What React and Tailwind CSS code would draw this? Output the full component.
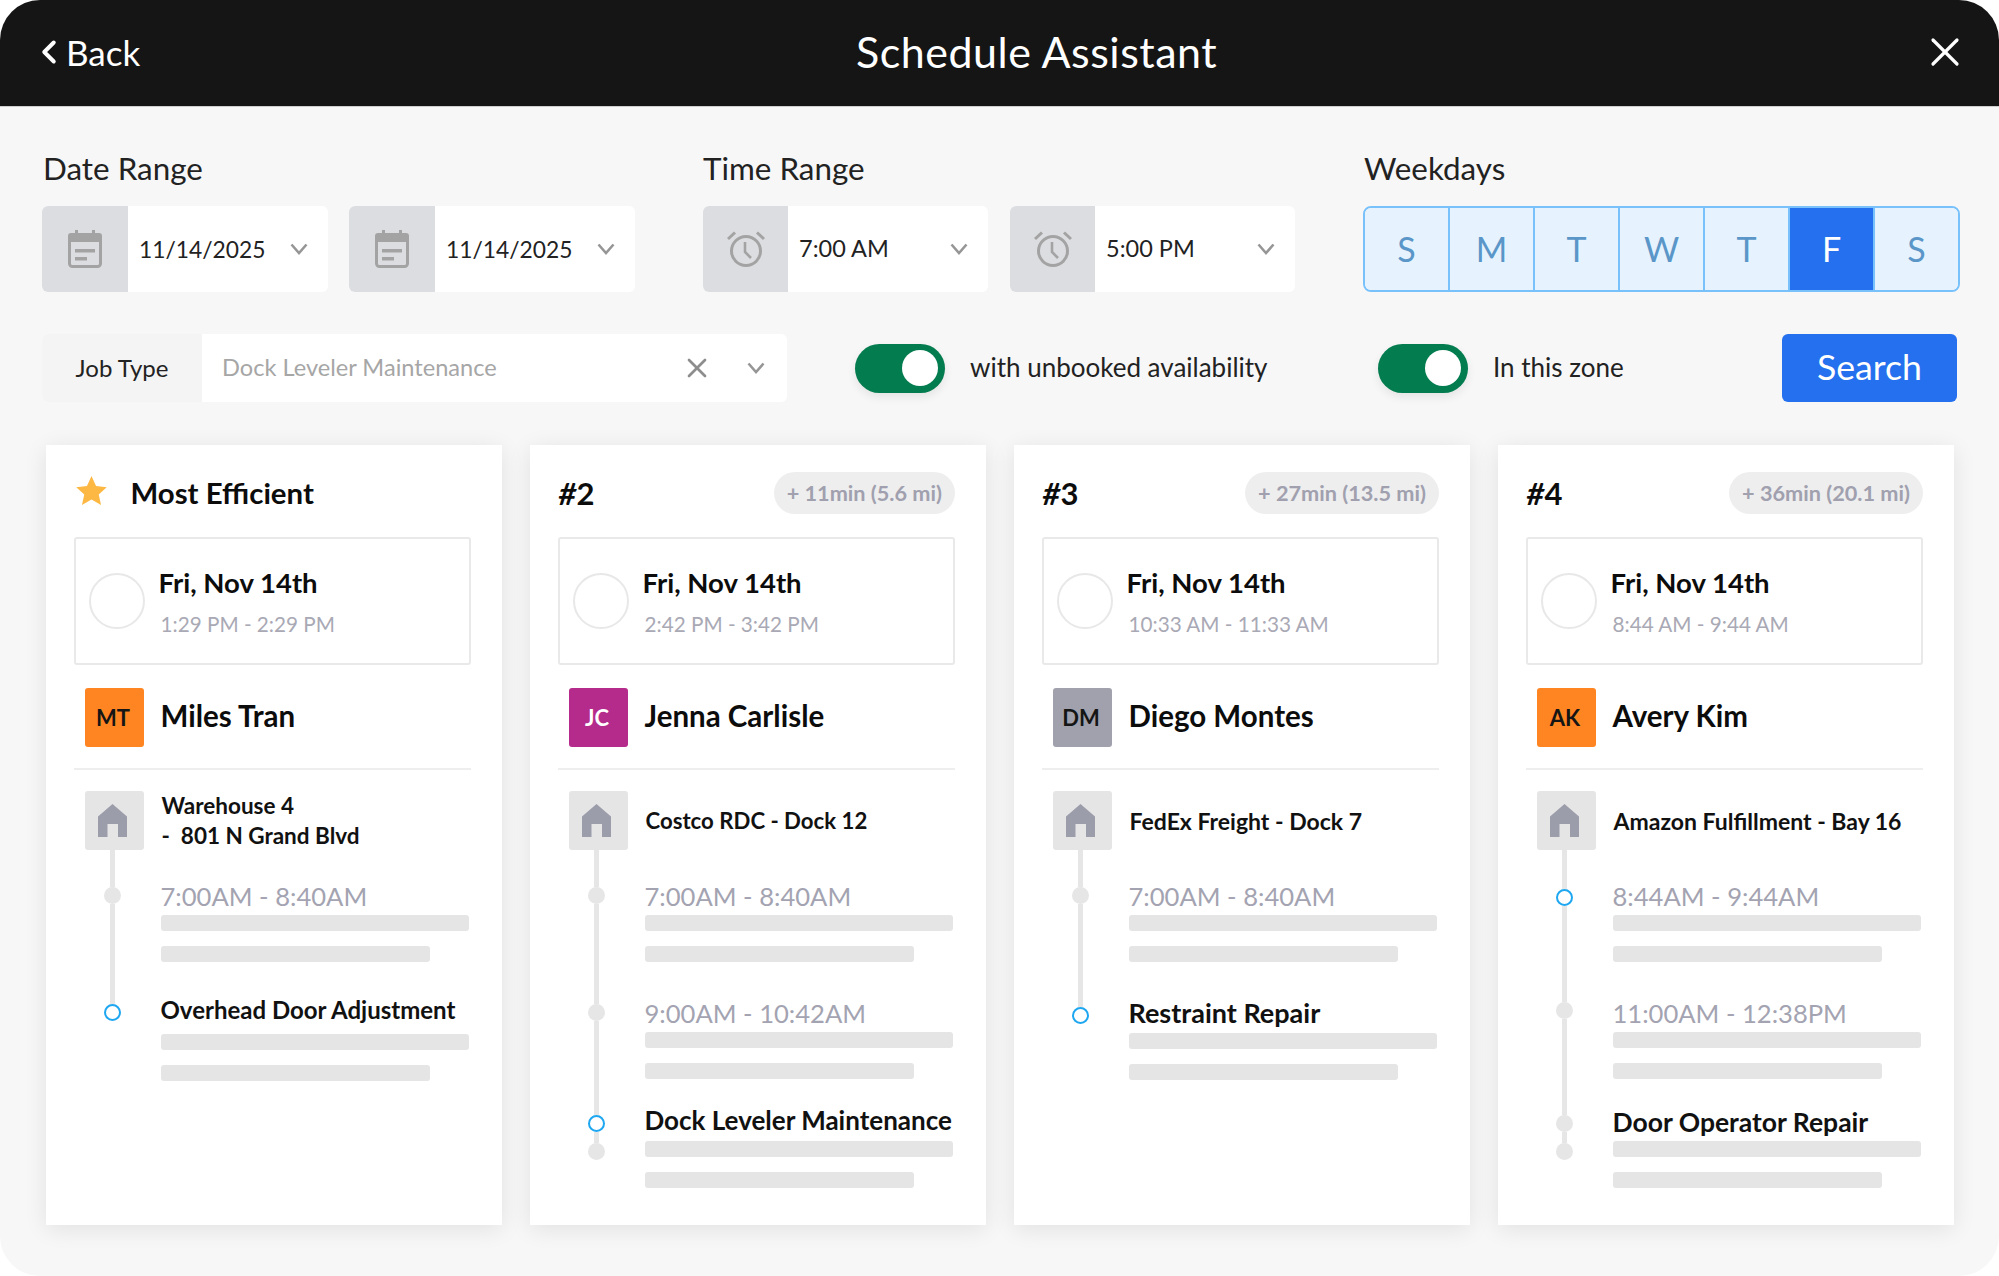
import { ChevronLeft, X } from "lucide-react";

const FONT = "font-['Lato','Liberation_Sans',sans-serif]";

const CARDS = [
  {
    rank: "Most Efficient",
    star: true,
    time: "1:29 PM - 2:29 PM",
    initials: "MT",
    avatar: "bg-[#ff8522]",
    name: "Miles Tran",
    address: ["Warehouse 4", "-\u00a0 801 N Grand Blvd"],
    addressSize: "text-[22.5px]",
    items: [
      { text: "7:00AM - 8:40AM", pad: "pt-[28px]", lead: "h-[37px]", gap: "mb-px" },
      { text: "Overhead Door Adjustment", title: "text-[24px]", blue: true, end: true, pad: "pt-[30px]", lead: "h-[42px]", gap: "mb-[6px]" },
    ],
  },
  {
    rank: "#2",
    badge: "+ 11min (5.6 mi)",
    time: "2:42 PM - 3:42 PM",
    initials: "JC",
    avatar: "bg-[#b52b8c] text-white",
    name: "Jenna Carlisle",
    address: ["Costco RDC - Dock 12"],
    addressSize: "text-[22.2px]",
    items: [
      { text: "7:00AM - 8:40AM", pad: "pt-[28px]", lead: "h-[37px]", gap: "mb-px" },
      { text: "9:00AM - 10:42AM", pad: "pt-[33px]", lead: "h-[42px]", gap: "mb-px" },
      { text: "Dock Leveler Maintenance", title: "text-[26px]", blue: true, tail: true, pad: "pt-[23px]", lead: "h-[36px]", gap: "mb-[3px]" },
    ],
  },
  {
    rank: "#3",
    badge: "+ 27min (13.5 mi)",
    time: "10:33 AM - 11:33 AM",
    initials: "DM",
    avatar: "bg-[#a0a1ad]",
    name: "Diego Montes",
    address: ["FedEx Freight - Dock 7"],
    addressSize: "text-[23px]",
    items: [
      { text: "7:00AM - 8:40AM", pad: "pt-[28px]", lead: "h-[37px]", gap: "mb-px" },
      { text: "Restraint Repair", title: "text-[27px]", blue: true, end: true, pad: "pt-[33px]", lead: "h-[45px]", gap: "mb-[2px]" },
    ],
  },
  {
    rank: "#4",
    badge: "+ 36min (20.1 mi)",
    time: "8:44 AM - 9:44 AM",
    initials: "AK",
    avatar: "bg-[#ff8522]",
    name: "Avery Kim",
    address: ["Amazon Fulfillment - Bay 16"],
    addressSize: "text-[23px]",
    items: [
      { text: "8:44AM - 9:44AM", blue: true, pad: "pt-[28px]", lead: "h-[39px]", gap: "mb-px" },
      { text: "11:00AM - 12:38PM", pad: "pt-[33px]", lead: "h-[40px]", gap: "mb-px" },
      { text: "Door Operator Repair", title: "text-[26.5px]", tail: true, pad: "pt-[25px]", lead: "h-[36px]", gap: "mb-px" },
    ],
  },
];

const DAYS = ["S", "M", "T", "W", "T", "F", "S"];

function Chevron() {
  return (
    <svg width="18" height="12" viewBox="0 0 18 12" fill="none" stroke="#969696" strokeWidth="2.6">
      <path d="M1.5 1.5 9 10l7.5-8.5" />
    </svg>
  );
}

function CalendarIcon() {
  return (
    <svg width="34" height="38" viewBox="0 0 34 38" fill="none">
      <path d="M7 0h3v6H7zM24 0h3v6h-3z" fill="#a3a3a3" />
      <rect x="1.5" y="5" width="31" height="31.5" rx="3" stroke="#a3a3a3" strokeWidth="3" />
      <path d="M0 6a3 3 0 0 1 3-3h28a3 3 0 0 1 3 3v6H0z" fill="#a3a3a3" />
      <path d="M7 19h20v3.5H7zM7 27h12v3.5H7z" fill="#a3a3a3" />
    </svg>
  );
}

function ClockIcon() {
  return (
    <svg width="38" height="36" viewBox="0 0 38 36" fill="none" stroke="#a3a3a3" strokeWidth="3">
      <circle cx="19" cy="20" r="14.5" />
      <path d="M18 11v10l6 6" strokeWidth="2.6" />
      <path d="M1 8 8 1.5M37 8 30 1.5" />
    </svg>
  );
}

function HouseIcon() {
  return (
    <svg width="29" height="33" viewBox="0 0 29 33" fill="#9c9dab">
      <path d="M14.5 0 29 12.5V33h-9V20H9.5v13H0V12.5z" />
    </svg>
  );
}

function Field({ icon, value, width, cell, size }) {
  return (
    <div className={`flex h-[86px] items-center overflow-hidden rounded-md bg-white ${width}`}>
      <div className={`flex h-full shrink-0 items-center justify-center bg-[#dcdde0] ${cell}`}>{icon}</div>
      <span className={`ml-[11px] flex-1 text-[#222] ${size}`}>{value}</span>
      <span className="mr-[20px] flex">
        <Chevron />
      </span>
    </div>
  );
}

function Toggle() {
  return (
    <div className="flex h-[49px] w-[90px] shrink-0 items-center justify-end rounded-full bg-[#037c4f] pr-[7px] shadow-[0_4px_10px_rgba(0,0,0,0.08)]">
      <div className="h-[36px] w-[36px] rounded-full bg-white" />
    </div>
  );
}

function Rail({ className }) {
  return <div className={`w-[5px] bg-[#e6e6e6] ${className}`} />;
}

function Dot({ blue }) {
  return blue ? (
    <div className="h-[17px] w-[17px] shrink-0 rounded-full border-[2.5px] border-[#1ea7f0] bg-white" />
  ) : (
    <div className="h-[17px] w-[17px] shrink-0 rounded-full bg-[#e6e6e6]" />
  );
}

function TimelineItem({ item }) {
  return (
    <div className="flex">
      <div className="flex w-[56px] shrink-0 flex-col items-center">
        <Rail className={item.lead} />
        <Dot blue={item.blue} />
        {!item.end && !item.tail && <Rail className="flex-1" />}
        {item.tail && (
          <>
            <Rail className="h-[11px]" />
            <Dot />
          </>
        )}
      </div>
      <div className={`ml-[20px] flex-1 ${item.pad}`}>
        <div
          className={`h-[36px] whitespace-nowrap leading-[36px] ${item.gap} ${
            item.title ? `font-bold text-[#111] ${item.title}` : "text-[25.6px] text-[#a3a3b1]"
          }`}
        >
          {item.text}
        </div>
        <div className="h-[16px] w-[308px] rounded-[3px] bg-[#e5e5e5]" />
        <div className="mt-[15px] h-[16px] w-[269px] rounded-[3px] bg-[#e5e5e5]" />
      </div>
    </div>
  );
}

function Card({ card }) {
  const hash = card.rank.startsWith("#");
  return (
    <div className="h-[780px] w-[456px] bg-white pl-[27.5px] pr-[31px] pt-[27px] shadow-[0_4px_22px_rgba(0,0,0,0.09)]">
      <div className="flex h-[42px] items-center justify-between">
        <div className="flex items-center text-[#0c0c0c]">
          {card.star && (
            <svg className="ml-[2px] mr-[24px] -mt-[6px]" width="31" height="31" viewBox="0 0 24 24" fill="#fdb843">
              <path d="M12 .8l3.5 7.7 8.3.9-6.2 5.6 1.8 8.2L12 18.9l-7.4 4.3 1.8-8.2L.2 9.4l8.3-.9z" />
            </svg>
          )}
          {hash ? (
            <span className="ml-px text-[31px] font-bold">
              <span className="italic">#</span>
              {card.rank.slice(1)}
            </span>
          ) : (
            <span className="text-[29.4px] font-bold">{card.rank}</span>
          )}
        </div>
        {card.badge && (
          <span className="flex h-[42px] items-center rounded-full bg-[#eeeeee] px-[13px] text-[21.7px] font-bold text-[#a0a0ae]">
            {card.badge}
          </span>
        )}
      </div>

      <div className="mt-[23px] flex h-[128px] items-center rounded-[3px] border-2 border-[#e9e9e9] pl-[13px]">
        <div className="h-[56px] w-[56px] shrink-0 rounded-full border-2 border-[#e8e8e8]" />
        <div className="ml-[14px] pt-px">
          <div className="text-[27.5px] font-bold leading-[36px] text-[#0c0c0c]">Fri, Nov 14th</div>
          <div className="ml-[2px] mt-[8px] text-[20.7px] leading-[30px] text-[#a9a9b5]">{card.time}</div>
        </div>
      </div>

      <div className="ml-[11px] mt-[23px] flex h-[59px] items-center">
        <div className={`flex h-[59px] w-[59px] shrink-0 items-center justify-center rounded-[3px] pr-[2px] text-[22px] font-bold text-[#151515] ${card.avatar}`}>
          {card.initials}
        </div>
        <span className="mb-[2px] ml-[17px] text-[29.5px] font-bold text-[#0c0c0c]">{card.name}</span>
      </div>

      <div className="mt-[21px] h-[2px] bg-[#eeeeee]" />

      <div className="ml-[11px] mt-[21px] flex h-[59px] items-center">
        <div className="flex h-[59px] w-[59px] shrink-0 items-center justify-center rounded-[3px] bg-[#e5e5e5] pr-[3px]">
          <HouseIcon />
        </div>
        <div className={`ml-[18px] whitespace-pre font-bold leading-[30px] text-[#111] ${card.addressSize}`}>
          {card.address.map((line) => (
            <div key={line}>{line}</div>
          ))}
        </div>
      </div>

      <div className="ml-[11px]">
        {card.items.map((item) => (
          <TimelineItem key={item.text} item={item} />
        ))}
      </div>
    </div>
  );
}

export default function App() {
  return (
    <div className={`h-[1276px] w-[1999px] overflow-hidden bg-white ${FONT}`}>
      <div className="h-full overflow-hidden rounded-[40px] bg-[#f7f7f7]">
        {/* Header */}
        <header className="flex h-[107px] items-center justify-between border-b border-[#cfcfcf] bg-[#151515] pb-[2px] pl-[30px] pr-[42px] text-white">
          <div className="flex items-center">
            <ChevronLeft size={38} strokeWidth={2.5} />
            <span className="-ml-[2px] text-[35px]">Back</span>
          </div>
          <h1 className="text-[43px] font-normal tracking-[0.5px]">Schedule Assistant</h1>
          <X className="-m-[12px]" size={48} strokeWidth={1.6} />
        </header>

        {/* Filters */}
        <div className="flex justify-between pl-[42px] pr-[39px] pt-[43px]">
          <div>
            <div className="h-[56px] pl-px text-[31.4px] leading-[36px] text-[#222]">Date Range</div>
            <div className="flex gap-[21px]">
              <Field icon={<CalendarIcon />} value="11/14/2025" width="w-[286px]" cell="w-[86px]" size="text-[22.8px]" />
              <Field icon={<CalendarIcon />} value="11/14/2025" width="w-[286px]" cell="w-[86px]" size="text-[22.8px]" />
            </div>
          </div>
          <div>
            <div className="h-[56px] text-[31.4px] leading-[36px] text-[#222]">Time Range</div>
            <div className="flex gap-[22px]">
              <Field icon={<ClockIcon />} value="7:00 AM" width="w-[285px]" cell="w-[85px]" size="text-[23.5px]" />
              <Field icon={<ClockIcon />} value="5:00 PM" width="w-[285px]" cell="w-[85px]" size="text-[23.5px]" />
            </div>
          </div>
          <div>
            <div className="h-[56px] pl-px text-[31.4px] leading-[36px] text-[#222]">Weekdays</div>
            <div className="flex h-[86px] w-[597px] overflow-hidden rounded-lg border-2 border-[#78c1fb]">
              {DAYS.map((day, i) =>
                i === 5 ? (
                  <div key={i} className="flex flex-1 items-center justify-center border-l-2 border-[#78c1fb] bg-[#2470ee] pb-px text-[34px] text-white">
                    {day}
                  </div>
                ) : (
                  <div key={i} className={`flex flex-1 items-center justify-center bg-[#e6f3fe] pb-px text-[34px] text-[#5a96c8] ${i === 0 ? "" : "border-l-2 border-[#78c1fb]"}`}>
                    {day}
                  </div>
                )
              )}
            </div>
          </div>
        </div>

        <div className="mt-[42px] flex h-[68px] items-center pl-[42px] pr-[42px]">
          <div className="flex h-full w-[745px] overflow-hidden rounded-md bg-white">
            <div className="flex w-[160px] items-center justify-center bg-[#f4f4f4] text-[24px] text-[#222]">Job Type</div>
            <div className="flex flex-1 items-center pl-[20px] text-[23.6px] text-[#a6a6a6]">
              <span className="flex-1">Dock Leveler Maintenance</span>
              <X className="mr-[34px]" size={32} strokeWidth={2} color="#8d8d8d" />
              <span className="mr-[22px] flex">
                <Chevron />
              </span>
            </div>
          </div>
          <div className="ml-[68px]">
            <Toggle />
          </div>
          <span className="ml-[25px] w-[408px] pb-px text-[26px] text-[#222]">with unbooked availability</span>
          <Toggle />
          <span className="ml-[25px] pb-px text-[26px] text-[#222]">In this zone</span>
          <button className="ml-auto flex h-full w-[175px] items-center justify-center rounded-md bg-[#2470ee] pb-[3px] text-[35.7px] text-white">
            Search
          </button>
        </div>

        {/* Result cards */}
        <div className="mt-[43px] flex gap-[28px] pl-[46px]">
          {CARDS.map((card) => (
            <Card key={card.rank} card={card} />
          ))}
        </div>
      </div>
    </div>
  );
}
